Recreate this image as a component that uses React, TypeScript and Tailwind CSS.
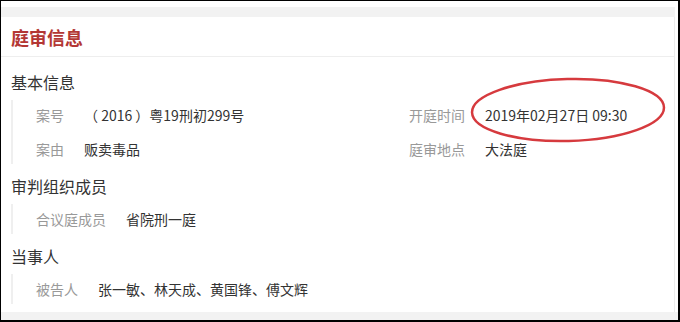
const font = { fontFamily: '"Noto Sans CJK SC", "Noto Sans", sans-serif' };

interface Field {
  label: string;
  value: string;
}

function Heading({ children, className = "" }: { children: string; className?: string }) {
  return (
    <div className={`h-6 flex items-center pl-[10px] text-base text-[#333] ${className}`}>{children}</div>
  );
}

function FieldBlock({ rows }: { rows: Field[][] }) {
  return (
    <div className="flex mt-1 pl-[10px]">
      <div className="w-[2px] bg-[#efefef] my-[2px]" />
      <div className="flex-1 min-w-0">
        {rows.map((row, i) => (
          <div key={i} className="h-[34px] flex items-center">
            {row.map((f, j) => (
              <div
                key={f.label}
                className={`flex items-center pl-[23px] text-sm ${j === 0 ? "w-[373px] shrink-0" : "flex-1"}`}
              >
                <span className="text-[#999] mr-5">{f.label}</span>
                <span className="text-[#333] whitespace-nowrap">{f.value}</span>
              </div>
            ))}
          </div>
        ))}
      </div>
    </div>
  );
}

export default function App() {
  return (
    <div
      className="relative w-[680px] h-[322px] overflow-hidden bg-white border-t border-l border-black border-r-2 border-b-2 flex flex-col"
      style={font}
    >
      <div className="h-[6px] shrink-0" />
      <div className="h-[10px] bg-[#f2f2f2] shrink-0 mr-[3px]" />
      <div className="flex-1 flex flex-col border-r border-[#ececec] mr-[3px]">
        <div className="h-[40px] flex items-center pl-[10px] border-b border-[#eeeeee] shrink-0">
          <span className="text-lg font-bold text-[#b33734]">庭审信息</span>
        </div>
        <Heading className="mt-[13px]">基本信息</Heading>
        <FieldBlock
          rows={[
            [
              { label: "案号", value: "（ 2016 ）粤19刑初299号" },
              { label: "开庭时间", value: "2019年02月27日 09:30" },
            ],
            [
              { label: "案由", value: "贩卖毒品" },
              { label: "庭审地点", value: "大法庭" },
            ],
          ]}
        />
        <Heading className="mt-2">审判组织成员</Heading>
        <FieldBlock rows={[[{ label: "合议庭成员", value: "省院刑一庭" }]]} />
        <Heading className="mt-2">当事人</Heading>
        <FieldBlock rows={[[{ label: "被告人", value: "张一敏、林天成、黄国锋、傅文辉" }]]} />
      </div>
      <div className="h-[8px] bg-[#f2f2f2] shrink-0" />
      <svg className="absolute left-[467px] top-[74px]" width="204" height="72" viewBox="0 0 204 72">
        <ellipse
          cx="100"
          cy="35"
          rx="96"
          ry="31"
          fill="none"
          stroke="#d63a3e"
          strokeWidth="2.5"
          transform="rotate(-1.5 100 35)"
        />
      </svg>
    </div>
  );
}
